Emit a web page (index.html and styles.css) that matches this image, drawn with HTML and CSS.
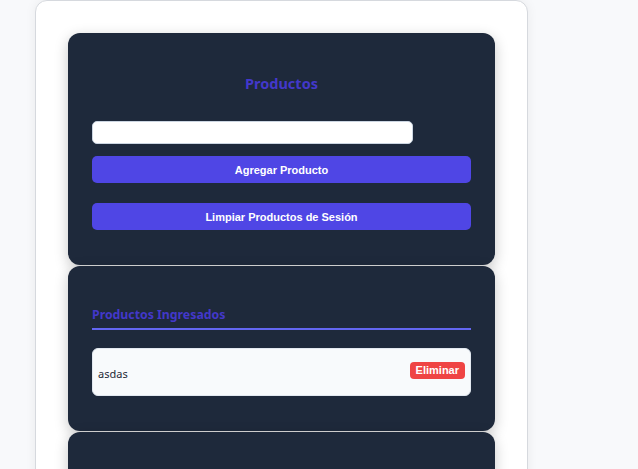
FILE: index.html
```html
<!DOCTYPE html>
<html lang="es">
<head>
<meta charset="utf-8">
<title>Productos</title>
<link rel="stylesheet" href="styles.css">
</head>
<body>
<main class="container">
  <section class="card card-form">
    <h2 class="title">Productos</h2>
    <input class="field" type="text">
    <button class="btn btn-add">Agregar Producto</button>
    <button class="btn btn-clear">Limpiar Productos de Sesión</button>
  </section>
  <section class="card card-list">
    <h3 class="subtitle">Productos Ingresados</h3>
    <ul class="list">
      <li class="item"><span class="item-name">asdas</span><button class="btn-del">Eliminar</button></li>
    </ul>
  </section>
  <section class="card card-empty"></section>
</main>
</body>
</html>
```
FILE: styles.css
```css
* { box-sizing: border-box; }
html, body { height: 100%; }
body {
  margin: 0;
  background: #f8f9fb;
  font-family: "Noto Sans", "Open Sans", sans-serif;
  overflow: hidden;
}
.container {
  width: 493px;
  margin-left: 35px;
  min-height: 600px;
  background: #ffffff;
  border: 1px solid #d6d9de;
  border-radius: 12px;
  box-shadow: 0 0 12px rgba(0, 0, 0, 0.06);
  padding: 32px 32px;
  display: flex;
  flex-direction: column;
  gap: 1px;
}
.card {
  background: #1e293b;
  border-radius: 12px;
  box-shadow: 0 4px 14px rgba(0, 0, 0, 0.22);
  padding: 24px;
}
.card-form {
  height: 232px;
  display: flex;
  flex-direction: column;
}
.title {
  margin: 15px 0 27px;
  font-size: 14.5px;
  line-height: 22px;
  font-weight: 700;
  color: #4338ca;
  text-align: center;
}
.field {
  width: 321px;
  height: 23px;
  margin: 0;
  border: 1px solid #cbd5e1;
  border-radius: 5px;
  background: #ffffff;
}
.btn {
  display: block;
  width: 100%;
  height: 27px;
  border: none;
  border-radius: 5px;
  background: #4f46e5;
  color: #ffffff;
  font-family: "Liberation Sans", Arial, sans-serif;
  font-weight: 700;
  font-size: 11px;
  padding: 0;
}
.btn-add { margin-top: 12px; }
.btn-clear { margin-top: 20px; }
.card-list {
  height: 165px;
}
.subtitle {
  margin: 16px 0 0;
  font-size: 12.3px;
  line-height: 18px;
  font-weight: 700;
  color: #4338ca;
  padding-bottom: 4px;
  border-bottom: 2px solid #6366f1;
}
.list {
  list-style: none;
  margin: 18px 0 0;
  padding: 0;
}
.item {
  height: 48px;
  background: #f8fafc;
  border: 1px solid #e2e8f0;
  border-radius: 6px;
  padding: 0 5px 0 5px;
  display: flex;
  align-items: center;
  justify-content: space-between;
}
.item-name {
  font-size: 11px;
  color: #1f2937;
  margin-top: 3px;
}
.btn-del {
  border: none;
  background: #ef4444;
  color: #ffffff;
  border-radius: 4px;
  font-family: "Liberation Sans", Arial, sans-serif;
  font-weight: 700;
  font-size: 11px;
  height: 17px;
  line-height: 17px;
  padding: 0 6px;
  margin-top: -3px;
}
.card-empty {
  height: 200px;
}
```
